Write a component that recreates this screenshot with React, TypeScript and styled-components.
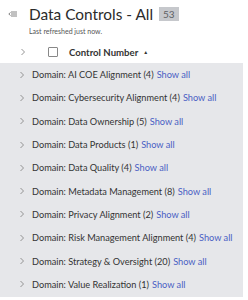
import React from "react";
import styled, { createGlobalStyle } from "styled-components";

const Global = createGlobalStyle`
  html, body { margin: 0; padding: 0; background: #fff; }
  body { font-family: Lato, "Open Sans", sans-serif; color: #333; }
`;

const Page = styled.div`
  width: 248px;
  height: 300px;
  overflow: hidden;
  display: flex;
  flex-direction: column;
`;

const TitleBar = styled.div`
  display: flex;
  align-items: center;
  padding: 4px 0 0 8px;
  height: 20px;
`;

const MenuIcon = styled.svg`
  width: 10px;
  height: 8px;
  margin-right: 11px;
  flex: none;
`;

const Title = styled.h1`
  margin: 0;
  font-size: 15.4px;
  font-weight: 400;
  color: #2b2b2b;
`;

const Badge = styled.span`
  margin-left: 6px;
  background: #c6c8cc;
  color: #5e6064;
  font-size: 10px;
  padding: 1px 4px;
  line-height: 12px;
`;

const Subtitle = styled.div`
  font-size: 7px;
  color: #555;
  padding: 3px 0 0 29px;
`;

const Header = styled.div`
  display: flex;
  align-items: center;
  height: 22px;
  margin-top: 6px;
  padding-left: 20px;
  font-size: 9.6px;
  font-weight: 700;
  color: #333;
`;

const Chevron = styled.svg`
  width: 6px;
  height: 8px;
  flex: none;
`;

const Checkbox = styled.span`
  width: 8px;
  height: 8px;
  border: 1px solid #888;
  border-radius: 1px;
  margin: 0 11px 0 22px;
  flex: none;
`;

const SortArrow = styled.span`
  font-size: 5px;
  margin-left: 5px;
  color: #333;
`;

const Group = styled.div`
  background: #e6e7ea;
  width: 243px;
  padding: 0 0 1px;
`;

const Row = styled.div`
  display: flex;
  align-items: center;
  height: 23.3px;
  padding-left: 19px;
  font-size: 9.2px;
  color: #333;
  white-space: nowrap;
`;

const RowLabel = styled.span`
  margin-left: 7px;
`;

const ShowAll = styled.a`
  color: #4a5fc4;
  margin-left: 3px;
  text-decoration: none;
`;

const ChevronIcon = () => (
  <Chevron viewBox="0 0 6 8">
    <path d="M1.5 1 L4.5 4 L1.5 7" fill="none" stroke="#888" strokeWidth="0.9" />
  </Chevron>
);

const rows: [string, number][] = [
  ["AI COE Alignment", 4],
  ["Cybersecurity Alignment", 4],
  ["Data Ownership", 5],
  ["Data Products", 1],
  ["Data Quality", 4],
  ["Metadata Management", 8],
  ["Privacy Alignment", 2],
  ["Risk Management Alignment", 4],
  ["Strategy & Oversight", 20],
  ["Value Realization", 1],
];

export default function App() {
  return (
    <Page>
      <Global />
      <TitleBar>
        <MenuIcon viewBox="0 0 10 8">
          <path d="M3 2 H9 M3 4 H9 M3 6 H9" stroke="#777" strokeWidth="0.9" />
          <path d="M2.5 2.5 L0.8 4 L2.5 5.5" fill="none" stroke="#777" strokeWidth="0.9" />
        </MenuIcon>
        <Title>Data Controls - All</Title>
        <Badge>53</Badge>
      </TitleBar>
      <Subtitle>Last refreshed just now.</Subtitle>
      <Header>
        <ChevronIcon />
        <Checkbox />
        Control Number
        <SortArrow>▲</SortArrow>
      </Header>
      <Group>
        {rows.map(([name, n]) => (
          <Row key={name}>
            <ChevronIcon />
            <RowLabel>
              Domain: {name} ({n})
            </RowLabel>
            <ShowAll href="#">Show all</ShowAll>
          </Row>
        ))}
      </Group>
    </Page>
  );
}
